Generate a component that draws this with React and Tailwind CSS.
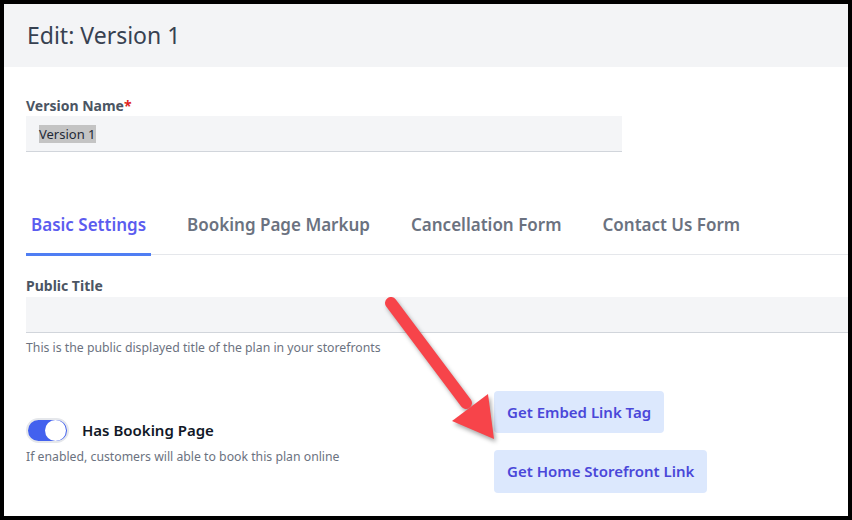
import React from 'react';

const font = { fontFamily: '"Noto Sans", "Open Sans", Arial, sans-serif' };

function Arrow() {
  // red callout arrow drawn on top of the form
  return (
    <svg
      className="absolute left-0 top-0 pointer-events-none"
      width="852"
      height="520"
      viewBox="0 0 852 520"
      style={{ filter: 'drop-shadow(2px 3px 2px rgba(0,0,0,0.35))' }}
    >
      <line x1="391" y1="303" x2="466" y2="403" stroke="#f7444a" strokeWidth="12" strokeLinecap="round" />
      <polygon points="494,439 452,421 488,394" fill="#f7444a" />
    </svg>
  );
}

function Tab({ label, active }) {
  return (
    <button
      className={
        'relative px-[5px] pt-[13px] pb-[17px] text-[17px] font-semibold leading-[24px] ' +
        (active ? 'text-[#5b5cef]' : 'text-[#6b7280]')
      }
    >
      {label}
      {active && <span className="absolute left-0 right-0 bottom-[-2px] h-[3px] bg-[#4f7ef3]" />}
    </button>
  );
}

export default function App() {
  return (
    <div className="relative w-[852px] h-[520px] bg-black p-[4px] overflow-hidden" style={font}>
      <div className="flex flex-col h-full bg-white">
        {/* Header */}
        <div className="h-[63px] shrink-0 bg-[#f3f4f6] flex items-center pl-[23px] text-[23px] text-[#374151]">
          Edit: Version 1
        </div>

        <div className="pl-[22px] flex flex-col">
          {/* Version name */}
          <label className="mt-[29px] text-[14px] font-bold leading-[20px] text-[#4b5563]">
            Version Name<span className="text-[#e02424]">*</span>
          </label>
          <div className="w-[596px] h-[36px] bg-[#f4f5f7] border-b border-[#d1d5db] flex items-center pl-[13px]">
            <span className="bg-[#c4c4c4] text-[13px] leading-[18px] text-[#1f2937]">Version 1</span>
          </div>

          {/* Tabs */}
          <div className="mt-[48px] flex gap-[31px] border-b border-[#e5e7eb]">
            <Tab label="Basic Settings" active />
            <Tab label="Booking Page Markup" />
            <Tab label="Cancellation Form" />
            <Tab label="Contact Us Form" />
          </div>

          {/* Public title */}
          <label className="mt-[21px] text-[14px] font-bold leading-[20px] text-[#4b5563]">Public Title</label>
          <div className="mt-[1px] h-[36px] bg-[#f4f5f7] border-b border-[#d1d5db]" />
          <p className="mt-[7px] text-[12.25px] leading-[16px] text-[#6b7280]">
            This is the public displayed title of the plan in your storefronts
          </p>

          {/* Booking page toggle + link buttons */}
          <div className="mt-[35px] flex items-start">
            <div className="w-[468px] shrink-0 mt-[27px]">
              <div className="flex items-center">
                <div className="w-[43px] h-[25px] rounded-full bg-[#4361ee] border-2 border-[#e5e7eb] flex items-center justify-end pr-[1px]">
                  <div className="w-[21px] h-[21px] rounded-full bg-white" />
                </div>
                <span className="ml-[13px] text-[15px] font-semibold leading-[25px] text-[#111827]">Has Booking Page</span>
              </div>
              <p className="mt-[6px] text-[12.25px] leading-[16px] text-[#6b7280]">
                If enabled, customers will able to book this plan online
              </p>
            </div>
            <div className="flex flex-col items-start gap-[17px]">
              <button className="h-[42px] px-[13px] rounded-[4px] bg-[#dce8fd] text-[15px] font-semibold text-[#4a47d9]">
                Get Embed Link Tag
              </button>
              <button className="h-[43px] px-[13px] rounded-[4px] bg-[#dce8fd] text-[15px] font-semibold text-[#4a47d9]">
                Get Home Storefront Link
              </button>
            </div>
          </div>
        </div>
      </div>
      <Arrow />
    </div>
  );
}
